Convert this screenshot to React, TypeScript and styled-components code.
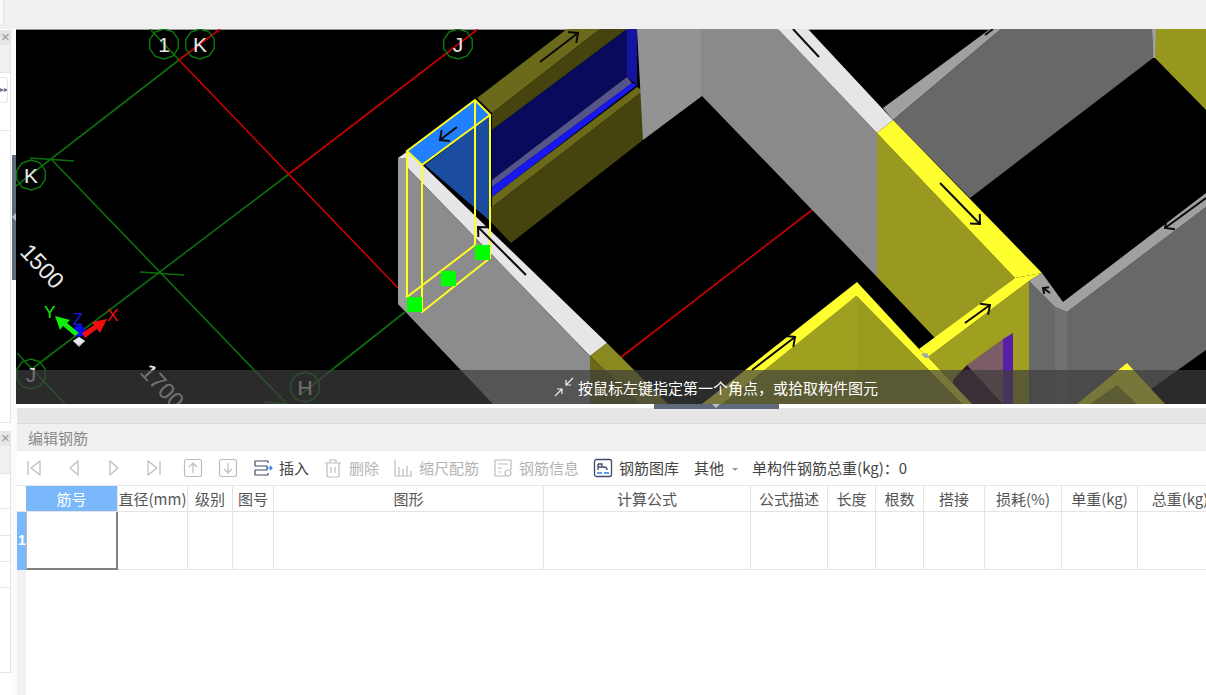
import React from "react";
import styled, { createGlobalStyle } from "styled-components";

const Global = createGlobalStyle`
  html, body { margin: 0; padding: 0; height: 695px; overflow: hidden; background: #fff; }
  body { font-family: "Noto Sans CJK SC", "Liberation Sans", sans-serif; }
  #root { width: 1206px; height: 695px; overflow: hidden; }
`;

const Page = styled.div`
  width: 1206px; height: 695px; display: flex; flex-direction: column; background: #fff; overflow: hidden;
`;
const TopBar = styled.div`
  height: 29px; flex: none; background: #f0f0f0; display: flex; align-items: flex-start;
`;
const TopTab = styled.div`
  width: 3px; height: 25px; background: #fafafa; border: 1px solid #e2e2e2; border-left: 0; border-top: 0; border-radius: 0 0 3px 0;
`;
const Main = styled.div`
  flex: 1; display: flex; min-height: 0;
`;
const Rail = styled.div`
  width: 11px; flex: none; display: flex; flex-direction: column; background: #fff;
`;
const RailSection = styled.div<{ $h: number }>`
  height: ${(p) => p.$h}px; flex: none; display: flex; flex-direction: column; border-right: 1px solid #e4e4e4; border-bottom: 1px solid #e4e4e4; box-sizing: border-box;
`;
const RailGap = styled.div`
  height: 7px; flex: none;
`;
const RailHead = styled.div`
  height: 15px; flex: none; margin-top: 1px; background: #e6e6e6; color: #999; font: 15px/14px "Liberation Sans", sans-serif; overflow: hidden; text-indent: 1px;
`;
const RailBand = styled.div`
  height: 27px; flex: none; background: #f1f1f1; border-bottom: 1px solid #e6e6e6;
`;
const RailRow = styled.div<{ $h: number }>`
  height: ${(p) => p.$h}px; flex: none; border-bottom: 1px solid #e6e6e6; box-sizing: border-box;
`;
const RailRowBox = styled.div`
  height: 26px; flex: none; margin-top: 4px; margin-bottom: 4px; width: 8px; box-sizing: border-box; border: 1px solid #e6e6e6; border-left: 0; border-radius: 0 4px 4px 0; color: #5f6b7c; font: 8px/24px "Liberation Sans", sans-serif; overflow: hidden; white-space: nowrap; text-align: right;
`;
const Gutter = styled.div`
  width: 6px; flex: none; background: #fbfbfb; display: flex; flex-direction: column;
`;
const GutterHandle = styled.div`
  width: 5px; margin: 126px 0 0 1px; height: 125px; background: #5f6b7c; position: relative;
  &::after { content: ""; position: absolute; left: 0; top: 58px; border: 4px solid transparent; border-left: 0; border-right: 4px solid #b8bec6; }
`;
const Content = styled.div`
  flex: 1; min-width: 0; display: flex; flex-direction: column; position: relative;
`;
const Canvas = styled.div`
  height: 375px; flex: none; position: relative; background: #000; overflow: hidden; margin-left: -1px;
  svg { display: block; }
`;
const HintBar = styled.div`
  position: absolute; left: 0; bottom: 0; height: 34px; background: rgba(61, 61, 61, 0.7);
  display: flex; align-items: center; justify-content: center; gap: 3px; color: #fff; font-size: 15px; padding-left: 209px; box-sizing: border-box; width: 1190px;
`;
const Handle = styled.div`
  position: absolute; left: 637px; top: 375px; width: 125px; height: 5px; background: #5f6b7c;
  &::after { content: ""; position: absolute; left: 58px; top: 0; border: 4px solid transparent; border-bottom: 0; border-top: 4px solid #b8bec6; }
`;
const SplitGap = styled.div`
  height: 4px; flex: none; background: #fff;
`;
const GrayBar = styled.div`
  height: 15px; flex: none; background: #e6e6e6; border-bottom: 1px solid #d8d8d8;
`;
const TitleBar = styled.div`
  height: 26px; flex: none; background: #f0f0f0; color: #8a8a8a; font-size: 15px; line-height: 27px; padding-left: 11px; border-bottom: 1px solid #e6e6e6;
`;
const Toolbar = styled.div`
  height: 34px; flex: none; display: flex; align-items: center; padding-left: 7px; font-size: 15px; color: #444; white-space: nowrap; background: #fff;
`;
const Group = styled.div<{ $ml?: number; $gap?: number }>`
  display: flex; align-items: center; margin-left: ${(p) => p.$ml || 0}px; gap: ${(p) => p.$gap ?? 6}px;
`;
const IconCell = styled.span`
  width: 20px; height: 20px; display: flex; align-items: center; justify-content: center; flex: none;
`;
const ToolLabel = styled.span<{ $off?: boolean }>`
  color: ${(p) => (p.$off ? "#b4b4b4" : "#444")}; line-height: 20px;
`;
const Caret = styled.span`
  width: 0; height: 0; border: 3px solid transparent; border-top: 3px solid #999; border-bottom: 0; margin: 2px 0 0 8px;
`;
const Table = styled.div`
  display: grid; width: 1206px; flex: none; border-top: 1px solid #e6e6e6;
  grid-template-columns: 9px 92px 70px 45px 41px 270px 207px 77px 48px 48px 61px 77px 76px 85px;
  grid-template-rows: 26px 58px;
`;
const HeadCell = styled.div<{ $active?: boolean }>`
  box-sizing: border-box; display: flex; align-items: center; justify-content: center; white-space: nowrap;
  font-size: 15px; color: ${(p) => (p.$active ? "#fff" : "#555")}; background: ${(p) => (p.$active ? "#7ab8fb" : "#fff")};
  border-right: 1px solid #e4e4e4; border-bottom: 1px solid #e4e4e4;
`;
const Corner = styled.div`
  background: #fff; border-bottom: 1px solid #e4e4e4;
`;
const RowHead = styled.div`
  background: #7ab8fb; color: #fff; font: bold 14px/57px "Liberation Sans", sans-serif; padding-left: 1px; overflow: hidden;
`;
const BodyCell = styled.div<{ $selected?: boolean }>`
  box-sizing: border-box; background: #fff;
  border-right: ${(p) => (p.$selected ? "2px solid #808080" : "1px solid #e4e4e4")};
  border-bottom: ${(p) => (p.$selected ? "2px solid #808080" : "1px solid #e4e4e4")};
  border-left: ${(p) => (p.$selected ? "1px solid #bbb" : "0")};
`;
const Filler = styled.div`
  flex: 1; border-left: 9px solid #f1f1f1; background: #fff;
`;
const SceneText = styled.text<{ $size?: number }>`
  font-family: "Liberation Sans", sans-serif; fill: #e8e8e8; font-size: ${(p) => p.$size || 21}px;
`;

const polys: [string, string][] = [
  ["477,98 567,29 600,29 492,113", "#6b6a1a"],
  ["492,113 600,29 627,29 492,130", "#45440f"],
  ["492,130 627,29 627,77 492,180", "#0a0a5c"],
  ["627,29 637,29 637,85 627,77", "#1414a0"],
  ["627,77 632,83 492,187 492,180", "#55558a"],
  ["632,83 637,85 492,197 492,187", "#1818ee"],
  ["637,87 643,91 492,207 492,197", "#6b6a1a"],
  ["643,91 643,140 511,243 470,200 492,207", "#45440f"],
  ["637,29 702,29 702,96 643,140", "#939393"],
  ["702,29 778,29 877,133 877,277 702,96", "#8a8a8a"],
  ["778,29 808,29 893,120 877,133", "#e6e6e6"],
  ["883,108 990,29 1001,29 893,120", "#a0a0a0"],
  ["893,120 1001,29 1152,29 1153,58 970,198", "#686868"],
  ["1152,29 1156,29 1156,58 1153,58", "#a0a0a0"],
  ["1156,29 1206,29 1206,110 1155,58", "#97961e"],
  ["877,133 1015,278 935,338 877,277", "#999820"],
  ["877,133 893,120 1042,273 1015,278", "#ffff30"],
  ["1029,281 1029,404 972,404 928,357", "#a0a020"],
  ["1015,278 1042,273 1029,281 928,357 919,349", "#ffff30"],
  ["1013,333 1013,404 1003,404 1003,339", "#5a1fa8"],
  ["1003,339 1003,404 967,365", "#7c5c64"],
  ["967,365 1003,404 953,404 953,380", "#30102a"],
  ["856,296 962,404 702,404", "#a0a020"],
  ["857,282 919,349 928,357 972,404 962,404 856,296 722,404 702,404", "#ffff30"],
  ["857,296 962,404 857,404", "#9a9a1e"],
  ["921,354 927,353 930,358 925,358", "#a8a8a8"],
  ["1029,281 1055,307 1067,312 1206,207 1206,350 1130,404 1029,404", "#686868"],
  ["1042,273 1063,302 1206,193 1206,207 1067,312 1055,307 1029,281", "#a0a0a0"],
  ["1055,307 1067,312 1067,404 1055,404", "#717171"],
  ["1127,363 1077,404 1165,404", "#ffff30"],
  ["1117,385 1090,404 1137,404", "#a0a020"],
  ["398,158 408,151 607,343 590,356", "#e6e6e6"],
  ["398,158 590,356 590,404 493,404 398,304", "#8c8c8c"],
  ["590,356 607,343 668,404 640,404", "#8a8920"],
  ["590,356 640,404 590,404", "#6a6918"],
  ["398,158 407,158 407,312 398,304", "#9c9c9c"],
  ["408,151 475,100 489,115 422,165", "#2080ff"],
  ["425,165 489,116 490,221", "#1a4da0"],
];
const gridGreen: [number, number, number, number][] = [
  [150, 29, 179, 60], [179, 60, 16, 186], [52, 160, 287, 404], [289, 174, 33, 368],
  [30, 158, 74, 161], [140, 272, 184, 275], [17, 353, 65, 404], [265, 402, 287, 404], [300, 395, 405, 312],
];
const gridRed: [number, number, number, number][] = [
  [220, 29, 179, 60], [179, 60, 400, 290], [289, 174, 478, 29], [620, 358, 812, 210],
];
const arrows: [number, number, number, number][] = [
  [457, 127, 440, 140], [540, 62, 578, 33], [526, 275, 478, 227], [793, 29, 819, 57],
  [985, 35, 993, 29], [940, 183, 980, 224], [965, 323, 990, 305], [752, 370, 795, 337],
  [1050, 293, 1043, 288], [1206, 198, 1165, 228],
];
const bubbles: [number, number, string][] = [
  [164, 44, "1"], [200, 44, "K"], [458, 44, "J"], [31, 175, "K"], [31, 374, "J"], [305, 387, "H"],
];
const greens = [[407, 297], [441, 271], [475, 245]];

const deca = (cx: number, cy: number, r: number) =>
  Array.from({ length: 10 }, (_, i) => {
    const a = (Math.PI * 2 * i) / 10 + 0.3;
    return `${(cx + r * Math.cos(a)).toFixed(1)},${(cy + r * Math.sin(a)).toFixed(1)}`;
  }).join(" ");

const arrowHead = (x1: number, y1: number, x2: number, y2: number, l: number) => {
  const a = Math.atan2(y2 - y1, x2 - x1);
  const p = (d: number) => `${x2 - l * Math.cos(a + d)},${y2 - l * Math.sin(a + d)}`;
  return `M${p(0.75)} L${x2},${y2} L${p(-0.75)}`;
};

const Scene = () => (
  <svg width={1190} height={375} viewBox="16 29 1190 375">
    <rect x={16} y={29} width={1190} height={375} fill="#000" />
    <line x1={16} y1={29.5} x2={1206} y2={29.5} stroke="#999" />
    {gridGreen.map((l, i) => (
      <line key={i} x1={l[0]} y1={l[1]} x2={l[2]} y2={l[3]} stroke="#0d700d" strokeWidth={1.6} />
    ))}
    {gridRed.map((l, i) => (
      <line key={i} x1={l[0]} y1={l[1]} x2={l[2]} y2={l[3]} stroke="#cc0000" strokeWidth={1.6} />
    ))}
    {bubbles.map(([x, y, t]) => (
      <g key={`${x}-${y}`}>
        <polygon points={deca(x, y, 15)} fill="none" stroke="#0d7a0d" strokeWidth={1.4} />
        <SceneText x={x} y={y + 7.5} textAnchor="middle">{t}</SceneText>
      </g>
    ))}
    <SceneText x={19} y={253} $size={23} transform="rotate(47 19 253)">1500</SceneText>
    <SceneText x={139} y={373} $size={23} transform="rotate(47 139 373)">1700</SceneText>
    {polys.map(([pts, fill], i) => (
      <polygon key={i} points={pts} fill={fill} />
    ))}
    <line x1={702} y1={29} x2={702} y2={96} stroke="#848484" />
    <g fill="none" stroke="#ffff20" strokeWidth={2}>
      <polygon points="407,151 475,100 490,115 422,165" />
      <polygon points="407,297 475,245 490,258 422,312" />
      <line x1={407} y1={151} x2={407} y2={297} />
      <line x1={422} y1={165} x2={422} y2={312} />
      <line x1={475} y1={100} x2={475} y2={245} />
      <line x1={490} y1={115} x2={490} y2={258} />
    </g>
    {greens.map(([x, y]) => (
      <rect key={x} x={x} y={y} width={15} height={15} fill="#00ff00" />
    ))}
    {arrows.map(([a, b, c, d], i) => (
      <g key={i} fill="none" stroke="#0a0a0a" strokeWidth={2}>
        <line x1={a} y1={b} x2={c} y2={d} />
        {i !== 3 && i !== 4 ? <path d={arrowHead(a, b, c, d, i === 8 ? 6 : 10)} /> : null}
      </g>
    ))}
    <polygon points="79,337 85,341 79,347 73,341" fill="#bdbdbd" />
    <polygon points="73,341 79,345 85,341 79,337" fill="#e8e8e8" />
    <circle cx={79} cy={331} r={6} fill="#0a0aee" />
    <polygon points="82,333 94,325 92,322 107,319 100,333 97,329 85,338" fill="#ee1010" />
    <polygon points="75,336 63,326 60,330 55,316 70,320 67,323 79,333" fill="#10ee10" />
    <text x={44} y={318} fontFamily="Liberation Sans" fontSize={17} fill="#10ee10">Y</text>
    <text x={73} y={325} fontFamily="Liberation Sans" fontSize={16} fill="#1818ee">Z</text>
    <text x={107} y={321} fontFamily="Liberation Sans" fontSize={17} fill="#ee1010">X</text>
  </svg>
);

const line = "#bdbdbd";
const Ico = ({ children }: { children: React.ReactNode }) => (
  <IconCell>
    <svg width={20} height={20} viewBox="0 0 20 20" fill="none" stroke={line} strokeWidth={1.2}>
      {children}
    </svg>
  </IconCell>
);

const headers = ["筋号", "直径(mm)", "级别", "图号", "图形", "计算公式", "公式描述", "长度", "根数", "搭接", "损耗(%)", "单重(kg)", "总重(kg)"];

export default function App() {
  return (
    <Page>
      <Global />
      <TopBar><TopTab /></TopBar>
      <Main>
        <Rail>
          <RailSection $h={394}>
            <RailHead>×</RailHead>
            <RailBand />
            <RailRowBox>▸▸</RailRowBox>
            <RailRow $h={24} />
          </RailSection>
          <RailGap />
          <RailSection $h={243}>
            <RailHead>×</RailHead>
            <RailBand />
            <RailRow $h={35} />
            <RailRow $h={27} />
            <RailRow $h={26} />
            <RailRow $h={26} />
          </RailSection>
        </Rail>
        <Gutter><GutterHandle /></Gutter>
        <Content>
          <Canvas>
            <Scene />
            <HintBar>
              <svg width={22} height={20} viewBox="0 0 22 20" fill="none" stroke="#eee" strokeWidth={1.2}>
                <path d="M20 1 L13 8 M13 3 V8 H18 M2 19 L9 12 M9 17 V12 H4" />
              </svg>
              <span>按鼠标左键指定第一个角点，或拾取构件图元</span>
            </HintBar>
          </Canvas>
          <Handle />
          <SplitGap />
          <GrayBar />
          <TitleBar>编辑钢筋</TitleBar>
          <Toolbar>
            <Group $gap={20}>
              <Ico><path d="M4 3 V17 M16 3 L7 10 L16 17 Z" /></Ico>
              <Ico><path d="M14 3 L6 10 L14 17 Z" /></Ico>
              <Ico><path d="M6 3 L14 10 L6 17 Z" /></Ico>
              <Ico><path d="M16 3 V17 M4 3 L13 10 L4 17 Z" /></Ico>
            </Group>
            <Group $ml={19} $gap={15}>
              <Ico><rect x={1.5} y={1.5} width={17} height={17} rx={2} /><path d="M10 15 V5 M6 9 L10 5 L14 9" /></Ico>
              <Ico><rect x={1.5} y={1.5} width={17} height={17} rx={2} /><path d="M10 5 V15 M6 11 L10 15 L14 11" /></Ico>
            </Group>
            <Group $ml={15}>
              <Ico>
                <path d="M15 5 V3 H2 V8 M2 12 H14 V8 H2 M2 12 V17 H15 V15" stroke="#3e4a6b" />
                <path d="M14 10 H19 M17 8 L19 10 L17 12" stroke="#2a7fe0" />
              </Ico>
              <ToolLabel>插入</ToolLabel>
            </Group>
            <Group $ml={14}>
              <Ico><path d="M2 5 H18 M7 5 V2 H13 V5 M4 5 V17 Q4 19 6 19 H14 Q16 19 16 17 V5 M8 9 V15 M12 9 V15" /></Ico>
              <ToolLabel $off>删除</ToolLabel>
            </Group>
            <Group $ml={14}>
              <Ico><path d="M2 2 V18 H19 M6 9 V18 M10 11 V18 M14 8 V18 M18 13 V18" /></Ico>
              <ToolLabel $off>缩尺配筋</ToolLabel>
            </Group>
            <Group $ml={14}>
              <Ico><path d="M13 18 H2 V2 H18 V12 M5 6 H15 M5 10 H9 M5 14 H8" /><circle cx={15} cy={15} r={3} /></Ico>
              <ToolLabel $off>钢筋信息</ToolLabel>
            </Group>
            <Group $ml={14}>
              <IconCell>
                <svg width={20} height={20} viewBox="0 0 20 20" fill="none" stroke="#3e4a6b" strokeWidth={1.3}>
                  <rect x={1.5} y={1.5} width={17} height={17} rx={2} />
                  <path d="M5 6 V12 M5 6 H9 V8 M5 9 H11 Q14 9 14 12" />
                  <path d="M4 15 H9 M11 15 H16" stroke="#2a7fe0" />
                </svg>
              </IconCell>
              <ToolLabel>钢筋图库</ToolLabel>
            </Group>
            <Group $ml={15} $gap={0}>
              <ToolLabel>其他</ToolLabel>
              <Caret />
            </Group>
            <Group $ml={14}>
              <ToolLabel>单构件钢筋总重(kg)：0</ToolLabel>
            </Group>
          </Toolbar>
          <Table>
            <Corner />
            {headers.map((h, i) => (
              <HeadCell key={h} $active={i === 0}>{h}</HeadCell>
            ))}
            <RowHead>1</RowHead>
            {headers.map((h, i) => (
              <BodyCell key={h} $selected={i === 0} />
            ))}
          </Table>
          <Filler />
        </Content>
      </Main>
    </Page>
  );
}
